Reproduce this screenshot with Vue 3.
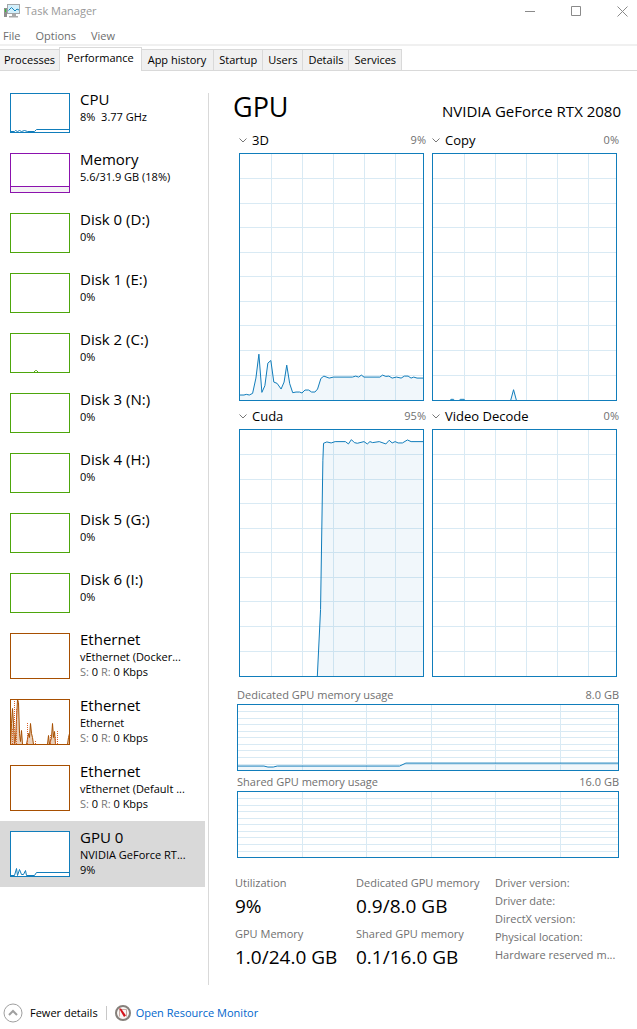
<script setup>
import { ref } from 'vue'

const menus = ['File', 'Options', 'View']
const tabs = ['Processes', 'Performance', 'App history', 'Startup', 'Users', 'Details', 'Services']
const activeTab = ref('Performance')

const items = [
  { name: 'CPU', detail: '8%  3.77 GHz', tone: 'blue', line: '0,38 4,38 5,37 7,38 9,37 11,38 14,37 17,38 24,38 26,36 60,36' },
  { name: 'Memory', detail: '5.6/31.9 GB (18%)', tone: 'purple', line: '0,33 60,33' },
  { name: 'Disk 0 (D:)', detail: '0%', tone: 'green' },
  { name: 'Disk 1 (E:)', detail: '0%', tone: 'green' },
  { name: 'Disk 2 (C:)', detail: '0%', tone: 'green', line: '23,39 25,37 26,37 28,39' },
  { name: 'Disk 3 (N:)', detail: '0%', tone: 'green' },
  { name: 'Disk 4 (H:)', detail: '0%', tone: 'green' },
  { name: 'Disk 5 (G:)', detail: '0%', tone: 'green' },
  { name: 'Disk 6 (I:)', detail: '0%', tone: 'green' },
  { name: 'Ethernet', detail: 'vEthernet (Docker...', net: true, tone: 'brown' },
  {
    name: 'Ethernet', detail: 'Ethernet', net: true, tone: 'brown',
    line: '0,45 1,24 2,9 3,24 4,45 5,40 6,20 7,0 8,3 9,34 10,42 11,31 12,45 16,45 18,34 19,38 20,24 21,34 22,38 23,45 37,45 38,36 39,45 41,38 42,24 43,38 44,32 45,45 57,45 58,38 59,34 59,45',
    dotted: 'M2 45V30M4 45V0M6 45V10M17 45V24M25 45V41M40 45V36M45 45V38M47 45V31',
  },
  { name: 'Ethernet', detail: 'vEthernet (Default ...', net: true, tone: 'brown' },
  {
    name: 'GPU 0', detail: 'NVIDIA GeForce RT...', third: '9%', tall: true, tone: 'blue',
    line: '0,44 4,44 6,37 7,44 9,38 11,43 13,43 15,39 16,44 24,44 26,41 60,41',
  },
]
const selected = ref(items.length - 1)

/* Pairs of x and height above the base line, on a 552 by 741 plane.
   A negative height keeps an idle stretch under the frame. */
const engines = [
  {
    name: '3D', value: '9%',
    data: [[0, 15], [12, 15], [19, 17], [28, 15], [38, 20], [48, 66], [57, 138], [66, 23], [75, 43], [84, 111], [93, 119], [102, 54], [112, 50], [124, 33], [133, 54], [141, 105], [150, 49], [159, 22], [169, 24], [180, 24], [187, 21], [196, 30], [207, 30], [216, 24], [226, 24], [234, 33], [244, 65], [253, 72], [269, 66], [282, 69], [339, 69], [349, 72], [358, 69], [366, 75], [374, 69], [422, 69], [430, 75], [440, 71], [449, 72], [459, 66], [472, 69], [486, 66], [496, 72], [507, 72], [516, 66], [524, 69], [534, 66], [552, 66]],
  },
  {
    name: 'Copy', value: '0%',
    data: [[0, -6], [46, -6], [54, 2], [62, 2], [68, -6], [74, -6], [82, 2], [94, 2], [102, -6], [233, -6], [243, 31], [253, -6], [552, -6]],
  },
  {
    name: 'Cuda', value: '95%',
    data: [[0, -6], [233, -6], [243, 200], [250, 650], [252, 701], [262, 705], [275, 702], [287, 706], [318, 706], [327, 699], [336, 712], [345, 703], [354, 701], [374, 706], [384, 699], [392, 706], [400, 703], [420, 706], [440, 699], [450, 710], [459, 702], [468, 706], [477, 702], [490, 702], [505, 711], [516, 706], [552, 706]],
  },
  { name: 'Video Decode', value: '0%', data: [] },
]

/* The same kind of pairs on a 1143 by 198 plane. */
const memories = [
  {
    name: 'Dedicated GPU memory usage', value: '8.0 GB',
    data: [[0, 12], [78, 12], [90, 9], [106, 9], [118, 12], [486, 12], [505, 21], [1143, 21]],
  },
  { name: 'Shared GPU memory usage', value: '16.0 GB', data: [] },
]

const stats = [
  { name: 'Utilization', value: '9%' },
  { name: 'Dedicated GPU memory', value: '0.9/8.0 GB' },
  { name: 'GPU Memory', value: '1.0/24.0 GB' },
  { name: 'Shared GPU memory', value: '0.1/16.0 GB' },
]
const facts = ['Driver version:', 'Driver date:', 'DirectX version:', 'Physical location:', 'Hardware reserved m...']

const line = (data, height) => data.map(([x, h]) => `${x},${height - h}`).join(' ')
const area = (data, width, height) => `0,${height} ${line(data, height)} ${width},${height}`
</script>

<template>
  <div class="window">
    <header class="titlebar">
      <svg class="app-icon" viewBox="0 0 16 14" aria-hidden="true">
        <rect x="0" y="4" width="3" height="9" fill="#8f8f8f" />
        <rect x="1" y="5" width="1" height="3" fill="#35c435" />
        <rect x="3.5" y=".5" width="12" height="9" fill="#d3f0fc" stroke="#a3a7aa" />
        <path d="M4.500 6.500 7.500 3.500l3.500 3.500 2-2 2 1" fill="none" stroke="#1687bd" />
        <path d="M8 10h4v2h2v1.500H5V12h3z" fill="#a9a9a9" />
      </svg>
      <span class="title">Task Manager</span>
      <div class="window-buttons">
        <button type="button" aria-label="Minimize"><svg viewBox="0 0 11 11"><path d="M0 5.500h10" /></svg></button>
        <button type="button" aria-label="Maximize"><svg viewBox="0 0 11 11"><path d="M.5.500h9v9h-9z" /></svg></button>
        <button type="button" aria-label="Close"><svg viewBox="0 0 11 11"><path d="M.5.500l10 10M10.500.500l-10 10" /></svg></button>
      </div>
    </header>

    <nav class="menubar">
      <button v-for="menu in menus" :key="menu" type="button">{{ menu }}</button>
    </nav>

    <div class="tabs" role="tablist">
      <button
        v-for="tab in tabs" :key="tab" type="button" role="tab"
        :aria-selected="tab === activeTab" :class="{ active: tab === activeTab }"
        @click="activeTab = tab"
      >{{ tab }}</button>
    </div>

    <div class="content">
      <aside class="sidebar">
        <button
          v-for="(item, i) in items" :key="i" type="button" class="item"
          :class="[item.tone, { tall: item.net || item.tall, selected: i === selected }]"
          @click="selected = i"
        >
          <svg class="thumb" :viewBox="item.net || item.tall ? '0 0 60 46' : '0 0 60 40'" aria-hidden="true">
            <rect class="thumb-back" width="60" height="46" />
            <rect v-if="item.name === 'Memory'" class="thumb-fill" y="33" width="60" height="7" />
            <polyline
              v-if="item.line" class="thumb-line" :class="{ filled: item.dotted }"
              :points="item.line" transform="translate(.5 .5)"
            />
            <path v-if="item.dotted" class="thumb-dotted" :d="item.dotted" transform="translate(.5 0)" />
            <rect class="thumb-frame" x=".5" y=".5" width="59" :height="item.net || item.tall ? 45 : 39" />
          </svg>
          <span class="item-text">
            <span class="item-name">{{ item.name }}</span>
            <span class="item-detail">{{ item.detail }}</span>
            <span v-if="item.net" class="item-detail"><i>S:</i> 0 <i>R:</i> 0 Kbps</span>
            <span v-if="item.third" class="item-detail">{{ item.third }}</span>
          </span>
        </button>
      </aside>

      <main class="panel">
        <div class="heading">
          <h1>GPU</h1>
          <h2>NVIDIA GeForce RTX 2080</h2>
        </div>

        <div class="engines">
          <section v-for="engine in engines" :key="engine.name">
            <div class="engine-head">
              <button type="button">
                <svg class="chevron" viewBox="0 0 8 5" aria-hidden="true"><path d="M.5.500 4 4 7.500.500" /></svg>
                {{ engine.name }}
              </button>
              <span>{{ engine.value }}</span>
            </div>
            <svg class="chart engine-chart" viewBox="0 0 552 741" preserveAspectRatio="none">
              <path v-for="n in 5" :key="'v' + n" class="grid" :d="`M${n * 94} 0V741`" />
              <path v-for="n in 9" :key="'h' + n" class="grid" :d="`M0 ${n * 74}H552`" />
              <polygon v-if="engine.data.length" class="area" :points="area(engine.data, 552, 741)" />
              <polyline class="line" :points="line(engine.data, 741)" />
            </svg>
          </section>
        </div>

        <div class="memories">
          <section v-for="memory in memories" :key="memory.name">
            <div class="memory-head"><span>{{ memory.name }}</span><span>{{ memory.value }}</span></div>
            <svg class="chart memory-chart" viewBox="0 0 1143 198" preserveAspectRatio="none">
              <path v-for="n in 5" :key="'v' + n" class="grid" :d="`M${n * 194} 0V198`" />
              <path v-for="n in 9" :key="'h' + n" class="grid" :d="`M0 ${n * 20}H1143`" />
              <polygon v-if="memory.data.length" class="area" :points="area(memory.data, 1143, 198)" />
              <polyline class="line" :points="line(memory.data, 198)" />
            </svg>
          </section>
        </div>

        <div class="summary">
          <dl class="stats">
            <div v-for="stat in stats" :key="stat.name">
              <dt>{{ stat.name }}</dt>
              <dd>{{ stat.value }}</dd>
            </div>
          </dl>
          <ul class="facts">
            <li v-for="fact in facts" :key="fact">{{ fact }}</li>
          </ul>
        </div>
      </main>
    </div>

    <footer class="footer">
      <button type="button" class="fewer">
        <svg viewBox="0 0 20 20" aria-hidden="true">
          <circle cx="10" cy="10" r="9" fill="#fff" stroke="#a0a0a0" />
          <path d="M6 12l4-4 4 4" fill="none" stroke="#a0a0a0" stroke-width="2" />
        </svg>
        Fewer details
      </button>
      <span class="separator"></span>
      <a href="#" class="monitor">
        <svg viewBox="0 0 16 16" aria-hidden="true">
          <circle cx="8" cy="8" r="7" fill="#f8f6f4" stroke="#85807b" stroke-width="2" />
          <path d="M4.500 11.500v-7h7v7" fill="none" stroke="#c9a9a2" />
          <path d="M4 3.500h2l5 7-2 1.500z" fill="#d3131b" />
        </svg>
        Open Resource Monitor
      </a>
    </footer>
  </div>
</template>

<style>
body {
  margin: 0;
  background: #fff;
}
</style>

<style scoped>
.window {
  display: flex;
  flex-direction: column;
  min-height: 100vh;
  box-sizing: border-box;
  font: 11px/16px "Open Sans", "Noto Sans", sans-serif;
  color: #000;
  background: #fff;
}

button {
  font: inherit;
  color: inherit;
  background: none;
  border: 0;
  padding: 0;
  margin: 0;
  text-align: left;
  white-space: nowrap;
}

.titlebar {
  display: flex;
  align-items: center;
  height: 22px;
  padding-left: 4px;
  color: #999;
}

.app-icon {
  width: 16px;
  height: 14px;
  margin-right: 5px;
}

.title {
  flex: 1;
}

.window-buttons {
  display: flex;
  margin-right: -8px;
}

.window-buttons button {
  display: flex;
  justify-content: center;
  width: 46px;
}

.window-buttons svg {
  width: 11px;
  height: 11px;
  fill: none;
  stroke: #8a8a8a;
}

.menubar {
  display: flex;
  gap: 15px;
  height: 24px;
  padding: 6px 3px 0;
  box-sizing: border-box;
  color: #6d6d6d;
  border-bottom: 2px solid #f0f0f0;
}

.tabs {
  display: flex;
  align-items: flex-end;
  height: 25px;
  box-sizing: border-box;
  border-bottom: 1px solid #d9d9d9;
}

.tabs button {
  height: 21px;
  padding: 0 5px;
  box-sizing: border-box;
  background: #f0f0f0;
  border: 1px solid #d9d9d9;
  border-width: 1px 1px 0 0;
}

.tabs button:first-child {
  padding: 0 4px;
}

.tabs .active {
  height: 24px;
  padding: 0 7px 3px;
  margin: 0 0 -1px -1px;
  background: #fff;
  border-left-width: 1px;
}

.tabs .active + button {
  padding: 0 7px 0 6px;
}

.content {
  display: flex;
  flex: 1;
  padding-top: 12px;
}

.sidebar {
  flex: none;
  width: 205px;
}

.item {
  display: flex;
  align-items: flex-start;
  gap: 10px;
  width: 100%;
  height: 60px;
  padding: 6px 0 0 10px;
}

.item.tall {
  height: 66px;
}

.item.selected {
  background: #d9d9d9;
}

.blue { --tone: #117dbb; --fill: #f1f6fa; }
.purple { --tone: #8b12ae; --fill: #f4f2f4; }
.green { --tone: #4da60c; --fill: #eff7e9; }
.brown { --tone: #a74f01; --fill: #e9d0bb; }

.thumb {
  flex: none;
  width: 60px;
  height: 40px;
  margin-top: 4px;
}

.tall .thumb {
  height: 46px;
}

.thumb-back { fill: #fff; }
.thumb-fill { fill: var(--fill); }
.thumb-line { fill: none; stroke: var(--tone); }
.thumb-line.filled { fill: var(--fill); }
.thumb-dotted { fill: none; stroke: #d9622b; stroke-dasharray: 1 1; }
.thumb-frame { fill: none; stroke: var(--tone); }

.item-text {
  display: flex;
  flex-direction: column;
}

.item-name {
  font-size: 15px;
  line-height: 20px;
}

.item-detail {
  line-height: 15px;
  white-space: pre;
}

.item-detail i {
  font-style: normal;
  color: #777;
}

.panel {
  flex: 1;
  min-width: 0;
  margin: 10px 0 0 3px;
  padding: 0 16px 0 24px;
  border-left: 1px solid #d9d9d9;
}

.heading {
  display: flex;
  align-items: baseline;
  justify-content: space-between;
  height: 38px;
  white-space: nowrap;
}

h1,
h2 {
  margin: 0;
  font-weight: 400;
}

h1 {
  font-size: 27px;
  line-height: 28px;
}

h2 {
  font-size: 15px;
  line-height: 20px;
}

.engines {
  display: grid;
  grid-template-columns: 1fr 1fr;
  gap: 6px;
  padding: 0 2px 0 6px;
}

.engines section {
  min-width: 0;
}

.engine-head,
.memory-head {
  display: flex;
  justify-content: space-between;
  color: #707070;
  white-space: nowrap;
}

.engine-head {
  height: 22px;
  line-height: 18px;
}

.engine-head button {
  display: flex;
  align-items: center;
  gap: 5px;
  height: 18px;
  font-size: 13px;
  color: #000;
}

.chevron {
  width: 8px;
  height: 5px;
  fill: none;
  stroke: #777;
}

.chart {
  display: block;
  width: 100%;
  box-sizing: border-box;
  border: 1px solid #117dbb;
}

.engine-chart {
  width: calc(100% - 2px);
  height: 248px;
}

.memory-chart {
  height: 67px;
}

.chart * {
  vector-effect: non-scaling-stroke;
}

.grid {
  stroke: #d9eaf4;
  shape-rendering: crispEdges;
}

.area {
  fill: #117dbb;
  fill-opacity: .06;
}

.line {
  fill: none;
  stroke: #117dbb;
}

.memories {
  display: grid;
  gap: 3px;
  padding: 10px 2px 0 4px;
}

.memory-head {
  height: 17px;
}

.summary {
  display: grid;
  grid-template-columns: 260px 1fr;
  padding: 16px 0 0 2px;
  color: #707070;
}

.stats {
  display: grid;
  grid-template-columns: 121px 1fr;
  margin: 0;
  align-content: start;
}

.stats div {
  height: 51px;
}

.stats dt,
.facts {
  line-height: 18px;
  white-space: nowrap;
}

.stats dd {
  margin: 0;
  font-size: 19px;
  line-height: 28px;
  color: #000;
  white-space: nowrap;
}

.facts {
  margin: 0;
  padding: 0;
  list-style: none;
}

.footer {
  display: flex;
  align-items: center;
  height: 32px;
  margin-top: 12px;
  padding-left: 3px;
}

.fewer,
.monitor {
  display: flex;
  align-items: center;
}

.fewer {
  gap: 7px;
}

.fewer svg {
  width: 20px;
  height: 20px;
}

.separator {
  width: 1px;
  height: 14px;
  margin: 0 8px;
  background: #c8c8c8;
}

.monitor {
  gap: 5px;
  color: #0066cc;
  text-decoration: none;
}

.monitor svg {
  width: 16px;
  height: 16px;
}
</style>
